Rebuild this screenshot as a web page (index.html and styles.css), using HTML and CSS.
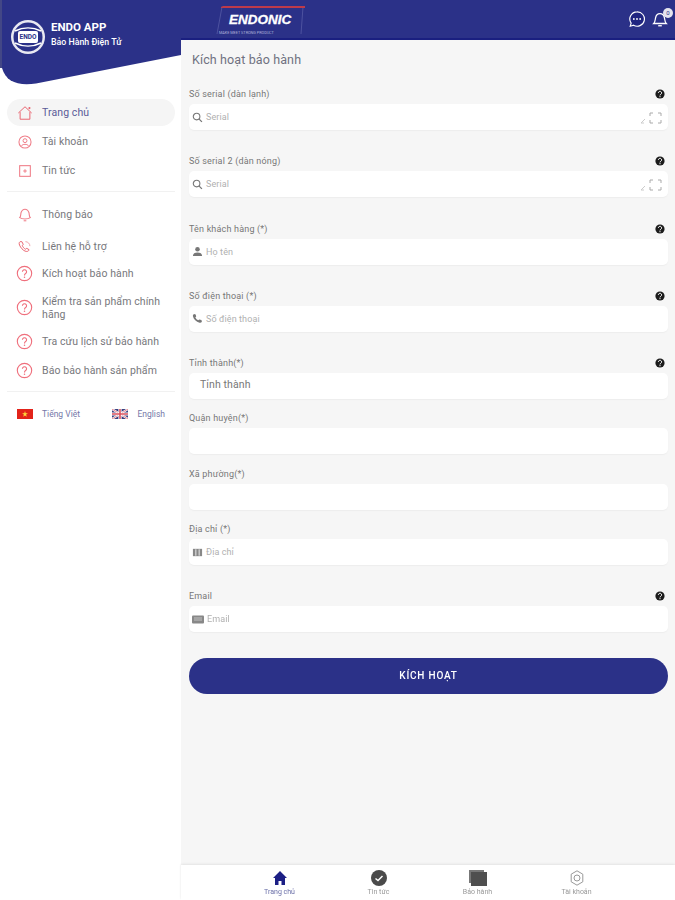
FILE: index.html
```html
<!DOCTYPE html>
<html lang="vi">
<head>
<meta charset="utf-8">
<title>Kích hoạt bảo hành</title>
<link rel="stylesheet" href="styles.css">
</head>
<body>
<svg class="sprites" width="0" height="0" aria-hidden="true">
  <symbol id="q" viewBox="0 0 18 18"><circle cx="9" cy="9" r="7.6" fill="none" stroke="#ef6f7c" stroke-width="1.2"/><path d="M6.8 7.2a2.2 2.2 0 1 1 3.4 1.9c-.8.5-1.2 1-1.2 1.9" fill="none" stroke="#ef6f7c" stroke-width="1.2"/><circle cx="9" cy="13" r=".8" fill="#ef6f7c"/></symbol>
  <symbol id="help" viewBox="0 0 10 10"><circle cx="5" cy="5" r="4.6" fill="#1c1c1c"/><path d="M3.4 3.9a1.6 1.6 0 1 1 2.5 1.3c-.6.4-.9.6-.9 1.2" fill="none" stroke="#fff" stroke-width="1"/><circle cx="5" cy="7.7" r=".6" fill="#fff"/></symbol>
  <symbol id="search" viewBox="0 0 12 12"><circle cx="5" cy="5" r="3.6" fill="none" stroke="#777" stroke-width="1.2"/><path d="M7.8 7.8l3 3" stroke="#777" stroke-width="1.4"/></symbol>
  <symbol id="scan" viewBox="0 0 24 12"><path d="M2 11l4-4M2 11h3" stroke="#ccc" stroke-width="1" fill="none"/><path d="M11 4V1h3M19 1h3v3M11 8v3h3M19 11h3V8" fill="none" stroke="#aaa" stroke-width="1"/></symbol>
</svg>
<div class="app">
  <aside class="sidebar">
    <header class="brand">
      <svg class="brand-shape" viewBox="0 0 181 86" width="181" height="86" aria-hidden="true"><rect width="3" height="68" fill="#434786"/><path d="M2 0H181V55L36 83.500C18 86 6 82 2 68Z" fill="#2b3188"/></svg>
      <div class="brand-logo">
        <svg viewBox="0 0 36 36" width="36" height="36" aria-hidden="true"><circle cx="18" cy="18" r="17" fill="#e9e9f2"/><circle cx="18" cy="18" r="14.500" fill="#2b3188"/><path d="M5 12c8-4 18-4 26 0M5 24c8 4 18 4 26 0" stroke="#fff" stroke-width="1.400" fill="none"/><rect x="8" y="12" width="20" height="12" rx="2" fill="#fff"/></svg>
        <span class="brand-mark">ENDO</span>
      </div>
      <div class="brand-text">
        <strong>ENDO APP</strong>
        <span>Bảo Hành Điện Tử</span>
      </div>
    </header>
    <nav class="menu">
      <a class="item active">
        <svg class="ico" viewBox="0 0 18 18"><path d="M1.500 9L9 2l7.500 7M3.500 8v8h11V8" fill="none" stroke="#e8636f" stroke-width="1.100"/><circle cx="14" cy="3.500" r="1.200" fill="#e8636f"/></svg>
        <span>Trang chủ</span>
      </a>
      <a class="item">
        <svg class="ico" viewBox="0 0 18 18"><circle cx="9" cy="9" r="6.800" fill="none" stroke="#ef7d88" stroke-width="1.200"/><circle cx="9" cy="7.500" r="2.200" fill="none" stroke="#ef7d88" stroke-width="1.100"/><path d="M5 13.500c1-2.500 7-2.500 8 0" fill="none" stroke="#ef7d88" stroke-width="1.100"/></svg>
        <span>Tài khoản</span>
      </a>
      <a class="item">
        <svg class="ico" viewBox="0 0 18 18"><rect x="3" y="3" width="12" height="12" fill="none" stroke="#ef7d88" stroke-width="1.200"/><path d="M7 9h4M9 7v4" stroke="#ef7d88" stroke-width="1.100"/></svg>
        <span>Tin tức</span>
      </a>
    </nav>
    <hr class="rule">
    <nav class="menu menu-second">
      <a class="item notice">
        <svg class="ico" viewBox="0 0 18 18"><path d="M3 12c1.500-1.500 1-3 1.500-5.500C5.500 3.500 7 2.500 9 2.500s3.500 1 4.500 4c.5 2.500 0 4 1.500 5.500-3 2-9 2-12 0z" fill="none" stroke="#ef7d88" stroke-width="1.200"/><path d="M7.500 15.500h3" stroke="#ef7d88" stroke-width="1.200"/></svg>
        <span>Thông báo</span>
      </a>
      <a class="item contact">
        <svg class="ico" viewBox="0 0 18 18"><path d="M3.500 3c-1.500 1-1.500 3 .5 6s4.500 5 7 5c1.500 0 2.500-1 2.500-2l-2.500-1.500-1.500 1c-1.500-.8-3-2.500-3.500-4L7 6 5.500 3z" fill="none" stroke="#e8636f" stroke-width="1.100"/><path d="M9.500 3a5 5 0 0 1 5 5" fill="none" stroke="#ef9aa3" stroke-width="1"/></svg>
        <span>Liên hệ hỗ trợ</span>
      </a>
      <a class="item help-item"><svg class="ico"><use href="#q"/></svg><span>Kích hoạt bảo hành</span></a>
      <a class="item help-item tall"><svg class="ico"><use href="#q"/></svg><span>Kiểm tra sản phẩm chính hãng</span></a>
      <a class="item help-item"><svg class="ico"><use href="#q"/></svg><span>Tra cứu lịch sử bảo hành</span></a>
      <a class="item help-item"><svg class="ico"><use href="#q"/></svg><span>Báo bảo hành sản phẩm</span></a>
    </nav>
    <hr class="rule rule-low">
    <div class="langs">
      <a class="lang">
        <svg viewBox="0 0 16 10" width="16" height="10"><rect width="16" height="10" fill="#e2231a"/><path d="M8 2l.7 2.200H11L9.100 5.500l.7 2.200L8 6.400 6.200 7.700l.7-2.200L5 4.200h2.300z" fill="#ffd83a"/></svg>
        <span>Tiếng Việt</span>
      </a>
      <a class="lang">
        <svg viewBox="0 0 16 10" width="16" height="10"><rect width="16" height="10" fill="#39407f"/><path d="M0 0l16 10M16 0L0 10" stroke="#fff" stroke-width="2"/><path d="M0 0l16 10M16 0L0 10" stroke="#d9505c" stroke-width=".7"/><path d="M8 0v10M0 5h16" stroke="#fff" stroke-width="3.200"/><path d="M8 0v10M0 5h16" stroke="#d9505c" stroke-width="1.600"/></svg>
        <span>English</span>
      </a>
    </div>
  </aside>

  <div class="main">
    <header class="topbar">
      <div class="logo">
        <svg class="logo-frame" viewBox="0 0 91 31" width="91" height="31" aria-hidden="true"><path d="M1 29L6 2" stroke="#4d52a0" stroke-width="1" fill="none"/><path d="M87 2L85 29" stroke="#4d52a0" stroke-width="1" fill="none"/><path d="M5 2C6 1 7 1 8 1H89V3H5Z" fill="#bd3a4a"/></svg>
        <span class="logo-word">ENDONIC</span>
        <span class="logo-tag">MAKE MEET STRONG PRODUCT</span>
      </div>
      <div class="top-actions">
        <svg viewBox="0 0 20 20" width="18" height="18"><path d="M10 2a8 8 0 0 0-6.500 12.600L2.500 18l3.700-1.100A8 8 0 1 0 10 2z" fill="#1f2480" stroke="#fff" stroke-width="1.300"/><circle cx="6.500" cy="10" r="1" fill="#fff"/><circle cx="10" cy="10" r="1" fill="#fff"/><circle cx="13.500" cy="10" r="1" fill="#fff"/></svg>
        <span class="bell">
          <svg viewBox="0 0 20 20" width="18" height="18"><path d="M3 15c1.500-1.500 1.500-3 2-6 .5-3 2.500-5 5-5s4.500 2 5 5c.5 3 .5 4.500 2 6z" fill="none" stroke="#fff" stroke-width="1.400"/><path d="M8 17.500h4" stroke="#fff" stroke-width="1.500"/></svg>
          <b class="badge">0</b>
        </span>
      </div>
    </header>

    <main class="content">
      <h1>Kích hoạt bảo hành</h1>
      <form class="form">
        <div class="field">
          <div class="label"><span>Số serial (dàn lạnh)</span><svg class="help"><use href="#help"/></svg></div>
          <div class="input"><svg class="lead"><use href="#search"/></svg><span class="ph">Serial</span><svg class="scan"><use href="#scan"/></svg></div>
        </div>
        <div class="field">
          <div class="label"><span>Số serial 2 (dàn nóng)</span><svg class="help"><use href="#help"/></svg></div>
          <div class="input"><svg class="lead"><use href="#search"/></svg><span class="ph">Serial</span><svg class="scan"><use href="#scan"/></svg></div>
        </div>
        <div class="field">
          <div class="label"><span>Tên khách hàng (*)</span><svg class="help"><use href="#help"/></svg></div>
          <div class="input">
            <svg class="lead" viewBox="0 0 12 12"><circle cx="6" cy="3.500" r="2.500" fill="#777"/><path d="M1 11c0-3 2-4 5-4s5 1 5 4z" fill="#777"/></svg>
            <span class="ph">Họ tên</span>
          </div>
        </div>
        <div class="field">
          <div class="label"><span>Số điện thoại (*)</span><svg class="help"><use href="#help"/></svg></div>
          <div class="input">
            <svg class="lead" viewBox="0 0 12 12"><path d="M2.200 1L4 1.500l.6 2.300-1 1c.7 1.300 1.900 2.500 3.300 3.200l1-1 2.400.6.500 1.900c-.5.800-1.500 1.300-2.500 1C4.500 9.700 1.800 6.800 1 3.500.9 2.500 1.300 1.500 2.200 1z" fill="#777"/></svg>
            <span class="ph">Số điện thoại</span>
          </div>
        </div>
        <div class="field tight">
          <div class="label"><span>Tỉnh thành(*)</span><svg class="help"><use href="#help"/></svg></div>
          <div class="input select">Tỉnh thành</div>
        </div>
        <div class="field tight">
          <div class="label"><span>Quận huyện(*)</span></div>
          <div class="input select"></div>
        </div>
        <div class="field tight">
          <div class="label"><span>Xã phường(*)</span></div>
          <div class="input select"></div>
        </div>
        <div class="field">
          <div class="label"><span>Địa chỉ (*)</span></div>
          <div class="input">
            <svg class="lead" viewBox="0 0 12 12"><path d="M1 2h10v8H1z" fill="#888"/><path d="M4.200 2.500v7M7.800 2.500v7" stroke="#fff" stroke-width=".9"/></svg>
            <span class="ph">Địa chỉ</span>
          </div>
        </div>
        <div class="field last">
          <div class="label"><span>Email</span><svg class="help"><use href="#help"/></svg></div>
          <div class="input">
            <svg class="lead wide" viewBox="0 0 12 10"><rect y="1" width="12" height="8" rx="1" fill="#888"/><path d="M2 3.500h8M2 5.500h8" stroke="#ddd" stroke-width=".7"/></svg>
            <span class="ph">Email</span>
          </div>
        </div>
        <button class="submit" type="button">KÍCH HOẠT</button>
      </form>
    </main>

    <footer class="tabs">
      <a class="tab on">
        <svg viewBox="0 0 16 16" width="16" height="16"><path d="M8 1L1 8h2v7h3.500v-4h3v4H13V8h2z" fill="#1c1f85"/></svg>
        <span>Trang chủ</span>
      </a>
      <a class="tab">
        <svg viewBox="0 0 16 16" width="16" height="16"><circle cx="8" cy="8" r="8" fill="#4a4a4a"/><path d="M4.500 8.500l2.500 2 4.500-4.500" fill="none" stroke="#fff" stroke-width="1.500"/></svg>
        <span>Tin tức</span>
      </a>
      <a class="tab">
        <svg viewBox="0 0 18 16" width="18" height="16"><rect x="0" y="0" width="15" height="13" fill="#777"/><rect x="2" y="2" width="16" height="14" fill="#4f4f4f"/></svg>
        <span>Bảo hành</span>
      </a>
      <a class="tab">
        <svg viewBox="0 0 16 16" width="16" height="16"><path d="M8 .8l5.800 3.400v7.600L8 15.200l-5.800-3.400V4.200z" fill="none" stroke="#999" stroke-width="1"/><circle cx="8" cy="8" r="3" fill="none" stroke="#999" stroke-width="1"/></svg>
        <span>Tài khoản</span>
      </a>
    </footer>
  </div>
</div>
</body>
</html>
```

FILE: styles.css
```css
* { box-sizing: border-box; }
html, body { margin: 0; height: 100%; }
body {
  font-family: Roboto, "Liberation Sans", sans-serif;
  color: #777;
  background: #fff;
  overflow: hidden;
}
.sprites { position: absolute; }
.app { display: flex; height: 900px; width: 675px; filter: blur(0.45px); }

.sidebar { width: 181px; flex: none; background: #fff; display: flex; flex-direction: column; }
.brand { height: 99px; flex: none; display: flex; align-items: flex-start; gap: 5px; padding: 19px 0 0 10px; position: relative; color: #fff; }
.brand-shape { position: absolute; left: 0; top: 0; }
.brand-logo { position: relative; width: 36px; height: 36px; flex: none; }
.brand-logo svg { display: block; }
.brand-mark { position: absolute; left: 8px; top: 13px; width: 20px; text-align: center; font-size: 6.500px; line-height: 10px; font-weight: 700; color: #2b3188; }
.brand-text { position: relative; display: flex; flex-direction: column; gap: 4px; padding-top: 2px; }
.brand-text strong { font-size: 11.500px; line-height: 12px; font-weight: 700; }
.brand-text span { font-size: 8.800px; line-height: 10px; font-weight: 500; }

.menu { display: flex; flex-direction: column; padding: 0 6px 0 7px; }
.item { display: flex; align-items: center; gap: 9px; padding-left: 10px; font-size: 10.500px; line-height: 13px; letter-spacing: .1px; color: #77777c; }
.menu .item { min-height: 29px; }
.item.active { height: 27px; min-height: 27px; margin-bottom: 1px; background: #f5f5f5; border-radius: 14px; color: #5a5b98; }
.ico { width: 16px; height: 16px; flex: none; }
.rule { width: 168px; height: 1px; border: 0; margin: 6px 0 0 7px; background: #f1f1f1; flex: none; }
.menu-second { padding-top: 8px; }
.menu .notice { min-height: 29px; margin-bottom: 5px; }
.menu .contact { min-height: 25px; }
.menu .help-item { min-height: 29px; gap: 9px; padding-left: 9px; }
.menu .help-item .ico { width: 17px; height: 17px; }
.menu .tall { min-height: 39px; }
.rule-low { margin-top: 6px; }
.langs { display: flex; justify-content: space-between; padding: 17px 16px 0 17px; }
.lang { display: flex; align-items: center; gap: 9px; font-size: 8.500px; color: #7577a8; }

.main { flex: 1; min-width: 0; display: flex; flex-direction: column; background: #f6f6f6; }
.topbar { height: 40px; flex: none; background: #2b3188; border-bottom: 2px solid #1a1f80; display: flex; justify-content: space-between; padding: 5px 6px 0 35px; }
.logo { position: relative; width: 91px; height: 31px; }
.logo-frame { position: absolute; left: 0; top: 0; }
.logo-word { position: absolute; left: 13px; top: 7px; font: italic 700 13.500px/16px "Liberation Sans", sans-serif; color: #fff; -webkit-text-stroke: .3px #fff; }
.logo-tag { position: absolute; left: 3px; top: 25px; font-size: 3.800px; line-height: 5px; color: #aeb1d8; white-space: nowrap; }
.top-actions { display: flex; gap: 5px; padding-top: 5px; }
.top-actions svg { display: block; }
.bell { position: relative; width: 18px; height: 18px; }
.badge { position: absolute; right: -4px; top: -2px; width: 10px; height: 10px; border-radius: 50%; background: #e4e4ee; color: #2b3188; font-size: 6px; line-height: 10px; font-weight: 400; text-align: center; }

.content { flex: 1; min-height: 0; padding: 0 7px 0 8px; }
.content h1 { margin: 0; height: 44px; padding: 12px 0 0 3px; font-size: 12.500px; line-height: 15px; font-weight: 400; letter-spacing: .12px; color: #6f7180; }
.form { display: flex; flex-direction: column; }
.field { margin-bottom: 21.300px; }
.field.tight { margin-bottom: 9.300px; }
.field.last { margin-bottom: 26px; }
.label { height: 20px; display: flex; justify-content: space-between; align-items: flex-start; padding: 4px 3px 0 0; font-size: 9px; line-height: 12px; letter-spacing: .18px; color: #777; }
.help { width: 10px; height: 10px; margin-top: 1px; }
.input { height: 26px; background: #fff; border-radius: 5px; display: flex; align-items: center; padding: 0 5px 0 3px; box-shadow: 0 1px 1px #eeeeee; font-size: 9px; letter-spacing: .1px; color: #b0b0b0; }
.lead { width: 11px; height: 11px; flex: none; margin-right: 3px; }
.lead.wide { width: 12px; margin-right: 3px; }
.ph { flex: 1; }
.scan { width: 24px; height: 12px; flex: none; margin-top: 1px; }
.select { padding: 0 0 3px 11px; font-size: 10.500px; color: #777; }
.submit { height: 36px; border: 0; border-radius: 18px; background: #2b3188; color: #fff; font: 500 10px/36px Roboto, sans-serif; letter-spacing: .8px; padding: 0; }

.tabs { height: 35px; flex: none; background: #fff; display: flex; justify-content: center; box-shadow: 0 -1px 2px #e4e4e4; }
.tab { width: 99px; display: flex; flex-direction: column; align-items: center; padding-top: 5px; gap: 2px; font-size: 7px; line-height: 9px; color: #999; }
.tab svg { display: block; }
.tab.on { color: #6a6fa8; }
```
